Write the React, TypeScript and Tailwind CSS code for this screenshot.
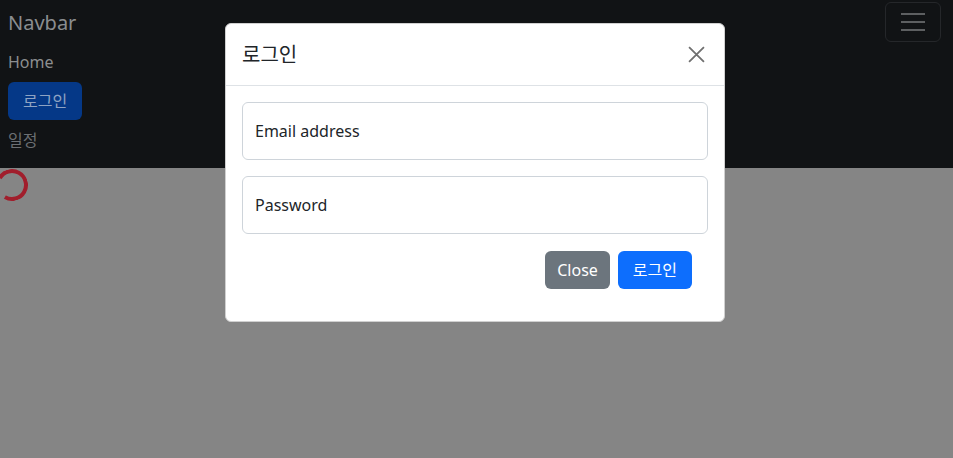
export default function App() {
  return (
    <div
      className="relative min-h-[458px] w-full bg-[#858585]"
      style={{ fontFamily: '"Noto Sans", "Noto Sans CJK KR", sans-serif' }}
    >
      {/* navbar (already dimmed by the backdrop) */}
      <nav className="bg-[#111315] px-2 pt-[3px] pb-4">
        <div className="flex items-start justify-between">
          <a className="block py-[5px] text-[20px] leading-[30px] text-[#8a8d90]">Navbar</a>
          <button className="-mt-[1px] mr-[4px] flex h-[40px] w-[56px] flex-col items-center justify-center gap-[6px] rounded-md border border-[#25272a]">
            <span className="block h-[2px] w-[24px] bg-[#5d5f61]" />
            <span className="block h-[2px] w-[24px] bg-[#5d5f61]" />
            <span className="block h-[2px] w-[24px] bg-[#5d5f61]" />
          </button>
        </div>
        <ul className="mt-[7px] flex flex-col">
          <li className="text-[16px] leading-[24px] text-[#8c8e90]">Home</li>
          <li className="mt-[8px]">
            <button className="h-[38px] rounded-md bg-[#053887] px-[15px] text-[16px] text-[#8ea3c3]">로그인</button>
          </li>
          <li className="mt-[8px] text-[16px] leading-[24px] text-[#6c6f73]">일정</li>
        </ul>
      </nav>
      <div className="h-[32px] w-[32px] -ml-[4px] mt-[1px] rotate-[-15deg] rounded-full border-[4px] border-[#a11e2c] border-l-transparent" />

      {/* modal */}
      <div className="absolute inset-0">
        <div className="ml-[225px] mt-[23px] w-[500px] overflow-hidden rounded-md border border-[#d0d0d0] bg-white">
          <div className="flex h-[62px] items-center justify-between border-b border-[#dee2e6] px-4">
            <h5 className="text-[20px] leading-[30px] text-[#212529]">로그인</h5>
            <button className="flex h-[24px] w-[24px] items-center justify-center">
              <svg width="17" height="17" viewBox="0 0 16 16">
                <path d="M1 1L15 15M15 1L1 15" stroke="#707070" strokeWidth="1.7" />
              </svg>
            </button>
          </div>
          <div className="px-4 pt-4 pb-8">
            <div className="flex h-[58px] items-center rounded-md border border-[#ced4da] px-3 text-[16px] text-[#212529]">
              Email address
            </div>
            <div className="mt-4 flex h-[58px] items-center rounded-md border border-[#ced4da] px-3 text-[16px] text-[#212529]">
              Password
            </div>
            <div className="mt-[17px] mr-4 flex justify-end gap-2">
              <button className="h-[38px] rounded-md bg-[#6c757d] px-3 text-[16px] text-white">Close</button>
              <button className="h-[38px] rounded-md bg-[#0d6efd] px-[15px] text-[16px] text-white">로그인</button>
            </div>
          </div>
        </div>
      </div>
    </div>
  );
}
